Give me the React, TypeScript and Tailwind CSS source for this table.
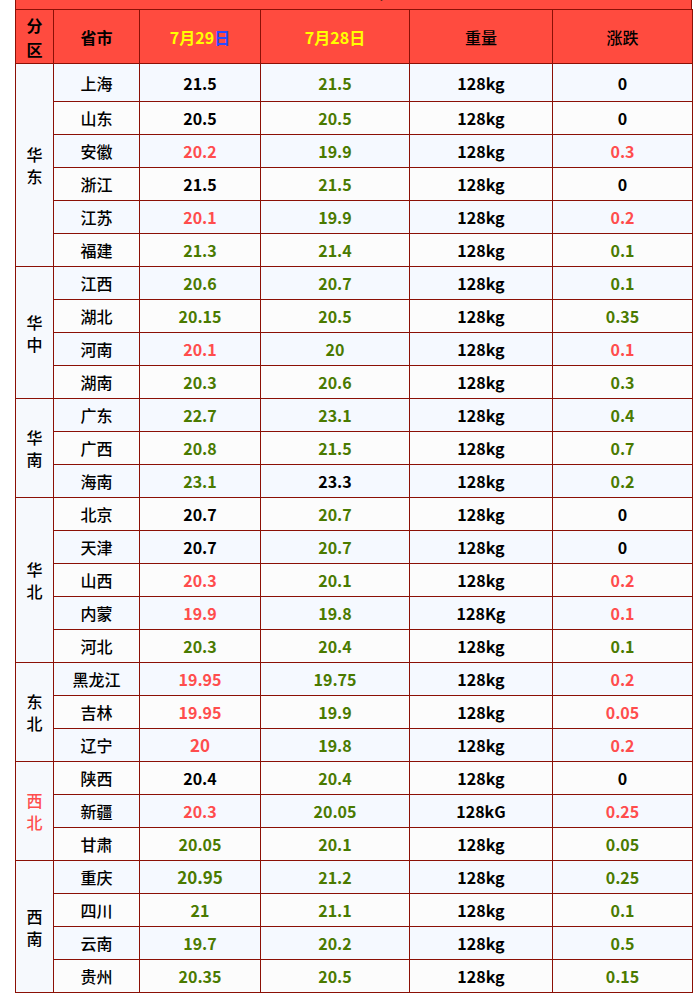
type Row = {
  city: string;
  today: string;
  todayColor: string;
  yesterday: string;
  yColor: string;
  weight: string;
  change: string;
  changeColor: string;
  big?: boolean;
};

type Region = { name: string; red?: boolean; rows: Row[] };

const K = "text-black";
const G = "text-[#4a7a00]";
const R = "text-[#ff4d4d]";

const r = (
  city: string,
  today: string,
  todayColor: string,
  yesterday: string,
  yColor: string,
  change: string,
  changeColor: string,
  weight = "128kg",
  big = false
): Row => ({ city, today, todayColor, yesterday, yColor, weight, change, changeColor, big });

const regions: Region[] = [
  {
    name: "华东",
    rows: [
      r("上海", "21.5", K, "21.5", G, "0", K),
      r("山东", "20.5", K, "20.5", G, "0", K),
      r("安徽", "20.2", R, "19.9", G, "0.3", R),
      r("浙江", "21.5", K, "21.5", G, "0", K),
      r("江苏", "20.1", R, "19.9", G, "0.2", R),
      r("福建", "21.3", G, "21.4", G, "0.1", G),
    ],
  },
  {
    name: "华中",
    rows: [
      r("江西", "20.6", G, "20.7", G, "0.1", G),
      r("湖北", "20.15", G, "20.5", G, "0.35", G),
      r("河南", "20.1", R, "20", G, "0.1", R),
      r("湖南", "20.3", G, "20.6", G, "0.3", G),
    ],
  },
  {
    name: "华南",
    rows: [
      r("广东", "22.7", G, "23.1", G, "0.4", G),
      r("广西", "20.8", G, "21.5", G, "0.7", G),
      r("海南", "23.1", G, "23.3", K, "0.2", G),
    ],
  },
  {
    name: "华北",
    rows: [
      r("北京", "20.7", K, "20.7", G, "0", K),
      r("天津", "20.7", K, "20.7", G, "0", K),
      r("山西", "20.3", R, "20.1", G, "0.2", R),
      r("内蒙", "19.9", R, "19.8", G, "0.1", R, "128Kg"),
      r("河北", "20.3", G, "20.4", G, "0.1", G),
    ],
  },
  {
    name: "东北",
    rows: [
      r("黑龙江", "19.95", R, "19.75", G, "0.2", R),
      r("吉林", "19.95", R, "19.9", G, "0.05", R),
      r("辽宁", "20", R, "19.8", G, "0.2", R, "128kg", true),
    ],
  },
  {
    name: "西北",
    red: true,
    rows: [
      r("陕西", "20.4", K, "20.4", G, "0", K),
      r("新疆", "20.3", R, "20.05", G, "0.25", R, "128kG"),
      r("甘肃", "20.05", G, "20.1", G, "0.05", G),
    ],
  },
  {
    name: "西南",
    rows: [
      r("重庆", "20.95", G, "21.2", G, "0.25", G, "128kg", true),
      r("四川", "21", G, "21.1", G, "0.1", G),
      r("云南", "19.7", G, "20.2", G, "0.5", G),
      r("贵州", "20.35", G, "20.5", G, "0.15", G),
    ],
  },
];

const cell = "border border-[#8b1006] text-center align-middle";

export default function App() {
  let idx = 0;
  return (
    <div className="bg-white min-h-screen pl-[15px] pr-[6px] text-[16px] font-['Noto_Sans_CJK_SC','Noto_Sans',sans-serif]">
      {/* title row, scrolled mostly out of view */}
      <div className="w-[677px] h-[9px] overflow-hidden bg-[#ff4b3f] border-x border-[#8b1006] flex items-start pl-[180px]">
        <div className="font-bold text-[#3a1a10] text-[16px] leading-[16px] mt-[-17px] tracking-[1px]">
          7月29日全国外三元（元/公斤）
        </div>
      </div>
      <table className="w-[677px] border-collapse table-fixed">
        <colgroup>
          <col className="w-[38px]" />
          <col className="w-[86px]" />
          <col className="w-[121px]" />
          <col className="w-[149px]" />
          <col className="w-[143px]" />
          <col className="w-[140px]" />
        </colgroup>
        <thead>
          <tr className="h-[54px] bg-[#ff4b3f]">
            <th className={`${cell} font-bold leading-[24px] px-0`}>
              分<br />区
            </th>
            <th className={`${cell} font-bold`}>省市</th>
            <th className={`${cell} font-bold text-[#ffff00]`}>
              7月29<span className="text-[#2b4bff]">日</span>
            </th>
            <th className={`${cell} font-bold text-[#ffff00]`}>7月28日</th>
            <th className={`${cell} font-medium`}>重量</th>
            <th className={`${cell} font-medium`}>涨跌</th>
          </tr>
        </thead>
        <tbody>
          {regions.map((reg) =>
            reg.rows.map((row, i) => {
              const even = idx % 2 === 0;
              const first = idx === 0;
              idx++;
              return (
                <tr
                  key={row.city}
                  className={`${first ? "h-[38px]" : "h-[33px]"} ${even ? "bg-[#f5f9ff]" : "bg-[#fcfcfc]"}`}
                >
                  {i === 0 && (
                    <td
                      rowSpan={reg.rows.length}
                      className={`${cell} bg-[#f6f9fd] leading-[22px] font-medium ${reg.red ? "text-[#ff4d4d]" : "text-black"}`}
                    >
                      {reg.name[0]}
                      <br />
                      {reg.name[1]}
                    </td>
                  )}
                  <td className={`${cell} font-medium text-black`}>{row.city}</td>
                  <td className={`${cell} font-bold ${row.big ? "text-[17px]" : ""} ${row.todayColor}`}>{row.today}</td>
                  <td className={`${cell} font-bold ${row.yColor}`}>{row.yesterday}</td>
                  <td className={`${cell} font-bold text-black`}>{row.weight}</td>
                  <td className={`${cell} font-bold ${row.changeColor}`}>{row.change}</td>
                </tr>
              );
            })
          )}
        </tbody>
      </table>
    </div>
  );
}
